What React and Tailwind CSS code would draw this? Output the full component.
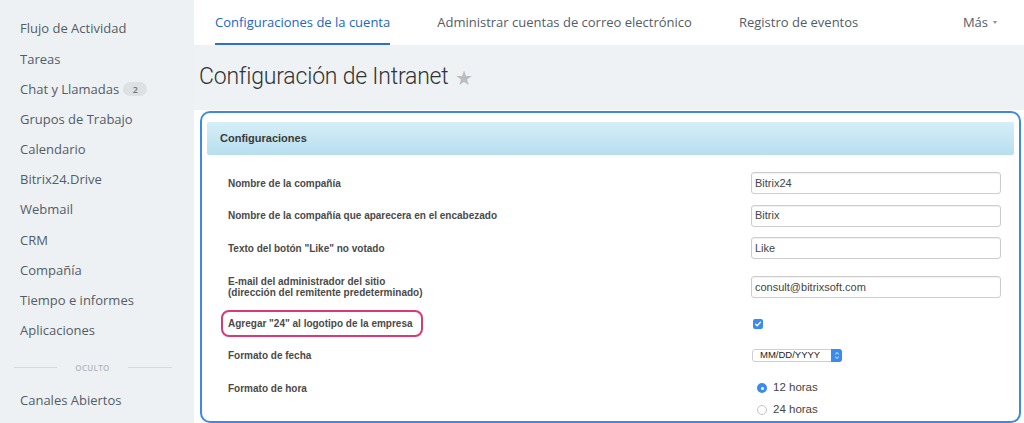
import React from "react";

const sideItems = [
  "Flujo de Actividad",
  "Tareas",
  "Chat y Llamadas",
  "Grupos de Trabajo",
  "Calendario",
  "Bitrix24.Drive",
  "Webmail",
  "CRM",
  "Compañía",
  "Tiempo e informes",
  "Aplicaciones",
];

function Sidebar() {
  return (
    <div className="w-[194px] shrink-0 bg-[#eef1f3] pt-[14px] font-['Open_Sans',sans-serif] text-[13px] text-[#535c69]">
      {sideItems.map((t) => (
        <div key={t} className="flex h-[30.2px] items-center pl-[20px]">
          <span>{t}</span>
          {t === "Chat y Llamadas" && (
            <span className="ml-[4px] flex h-[14px] w-[24px] items-center justify-center rounded-full bg-[#dde1e4] text-[9px] font-semibold text-[#6f767e]">
              2
            </span>
          )}
        </div>
      ))}
      <div className="flex h-[39.8px] items-center pl-[14px] pt-[4px]">
        <div className="h-px w-[43px] bg-[#d6dadd]" />
        <div className="w-[71px] text-center text-[8px] font-semibold tracking-[0.3px] text-[#b3b8bd]">
          OCULTO
        </div>
        <div className="h-px w-[44px] bg-[#d6dadd]" />
      </div>
      <div className="flex h-[30px] items-center pl-[20px]">Canales Abiertos</div>
    </div>
  );
}

function Tabs() {
  return (
    <div className="flex h-[45px] shrink-0 items-stretch bg-white pl-[21px] pr-[27px] font-['Open_Sans',sans-serif] text-[13px] text-[#535c69]">
      <div className="flex items-center border-b-2 border-[#2f6fcc] pt-[2px] text-[#2067c6]">
        Configuraciones de la cuenta
      </div>
      <div className="ml-[47px] flex items-center">Administrar cuentas de correo electrónico</div>
      <div className="ml-[47px] flex items-center">Registro de eventos</div>
      <div className="ml-auto flex items-center">
        Más
        <span className="ml-[5px] inline-block h-0 w-0 border-x-[2.5px] border-t-[3px] border-x-transparent border-t-[#8a9097]" />
      </div>
    </div>
  );
}

function Input({ value }) {
  return (
    <div className="flex h-[22px] w-[250px] items-center rounded-[3px] border border-[#cdcdcd] bg-white pl-[3px] text-[11px] text-[#444] shadow-[inset_0_1px_1px_rgba(0,0,0,0.06)]">
      {value}
    </div>
  );
}

function Label({ children }) {
  return <div className="w-[523px] shrink-0 text-[10px] font-bold leading-[11px] text-[#4a4a4a]">{children}</div>;
}

function Radio({ checked, label }) {
  return (
    <div className="flex h-[22px] items-center pl-[6px]">
      {checked ? (
        <span className="flex h-[10px] w-[10px] items-center justify-center rounded-full bg-[#3a8bef]">
          <span className="h-[3px] w-[3px] rounded-full bg-white" />
        </span>
      ) : (
        <span className="h-[10px] w-[10px] rounded-full border border-[#c3c3c3] bg-white" />
      )}
      <span className="ml-[6px] text-[11.5px] text-[#444]">{label}</span>
    </div>
  );
}

function Panel() {
  return (
    <div className="flex flex-1 bg-white pl-[6px] pr-[3px] pt-px">
      <div className="flex-1 rounded-[10px] border-2 border-[#3d89e6] px-[5px] pt-[9px] font-['Liberation_Sans',Arial,sans-serif]">
        <div className="flex h-[33px] items-center rounded-[2px] bg-gradient-to-b from-[#d6eef7] to-[#b7dfef] pl-[13px] text-[11px] font-bold text-[#3a3a3a]">
          Configuraciones
        </div>
        <div className="pl-[21px] pt-[12px]">
          <div className="flex h-[32px] items-center">
            <Label>Nombre de la compañía</Label>
            <Input value="Bitrix24" />
          </div>
          <div className="flex h-[33px] items-center">
            <Label>Nombre de la compañía que aparecera en el encabezado</Label>
            <Input value="Bitrix" />
          </div>
          <div className="flex h-[32px] items-center">
            <Label>Texto del botón "Like" no votado</Label>
            <Input value="Like" />
          </div>
          <div className="flex h-[46px] items-center">
            <Label>
              E-mail del administrador del sitio
              <br />
              (dirección del remitente predeterminado)
            </Label>
            <Input value="consult@bitrixsoft.com" />
          </div>
          <div className="flex h-[27px] items-center">
            <div className="w-[523px] shrink-0">
              <span className="-ml-[7px] inline-flex h-[27px] items-center rounded-[8px] border-2 border-[#d93a74] pl-[5px] pr-[8px] text-[10px] font-bold text-[#4a4a4a]">
                Agregar "24" al logotipo de la empresa
              </span>
            </div>
            <span className="ml-[2px] flex h-[10px] w-[10px] items-center justify-center rounded-[2px] bg-[#3a8bef]">
              <svg width="8" height="8" viewBox="0 0 8 8">
                <path d="M1.6 4.2 L3.2 5.8 L6.4 2.2" fill="none" stroke="white" strokeWidth="1.3" strokeLinecap="round" strokeLinejoin="round" />
              </svg>
            </span>
          </div>
          <div className="flex h-[35px] items-center pt-[1px]">
            <Label>Formato de fecha</Label>
            <div className="ml-px flex h-[13px] w-[90px] items-stretch rounded-[3px] border border-[#cfcfcf] bg-white">
              <span className="flex flex-1 items-center pl-[7px] text-[9.5px] leading-none text-[#222]">MM/DD/YYYY</span>
              <span className="-my-px -mr-px flex w-[11px] flex-col items-center justify-center rounded-r-[3px] bg-[#3a8bef]">
                <svg width="6" height="9" viewBox="0 0 6 9">
                  <path d="M1.2 3.2 L3 1.6 L4.8 3.2 M1.2 5.8 L3 7.4 L4.8 5.8" fill="none" stroke="white" strokeWidth="0.9" />
                </svg>
              </span>
            </div>
          </div>
          <div className="flex items-start pt-[5px]">
            <div className="flex h-[22px] w-[523px] shrink-0 items-center text-[10px] font-bold text-[#4a4a4a]">
              Formato de hora
            </div>
            <div className="flex flex-col">
              <Radio checked label="12 horas" />
              <Radio label="24 horas" />
            </div>
          </div>
        </div>
      </div>
    </div>
  );
}

export default function App() {
  return (
    <div className="flex h-[423px] w-[1024px] overflow-hidden bg-[#eef2f4]">
      <Sidebar />
      <div className="flex flex-1 flex-col">
        <Tabs />
        <div className="flex h-[65px] shrink-0 items-center pl-[5px] font-['Roboto',sans-serif]">
          <span className="text-[23px] font-light tracking-[-0.2px] text-[#333]">Configuración de Intranet</span>
          <span className="ml-[6px] text-[20px] text-[#b9bdc2]">★</span>
        </div>
        <Panel />
      </div>
    </div>
  );
}
